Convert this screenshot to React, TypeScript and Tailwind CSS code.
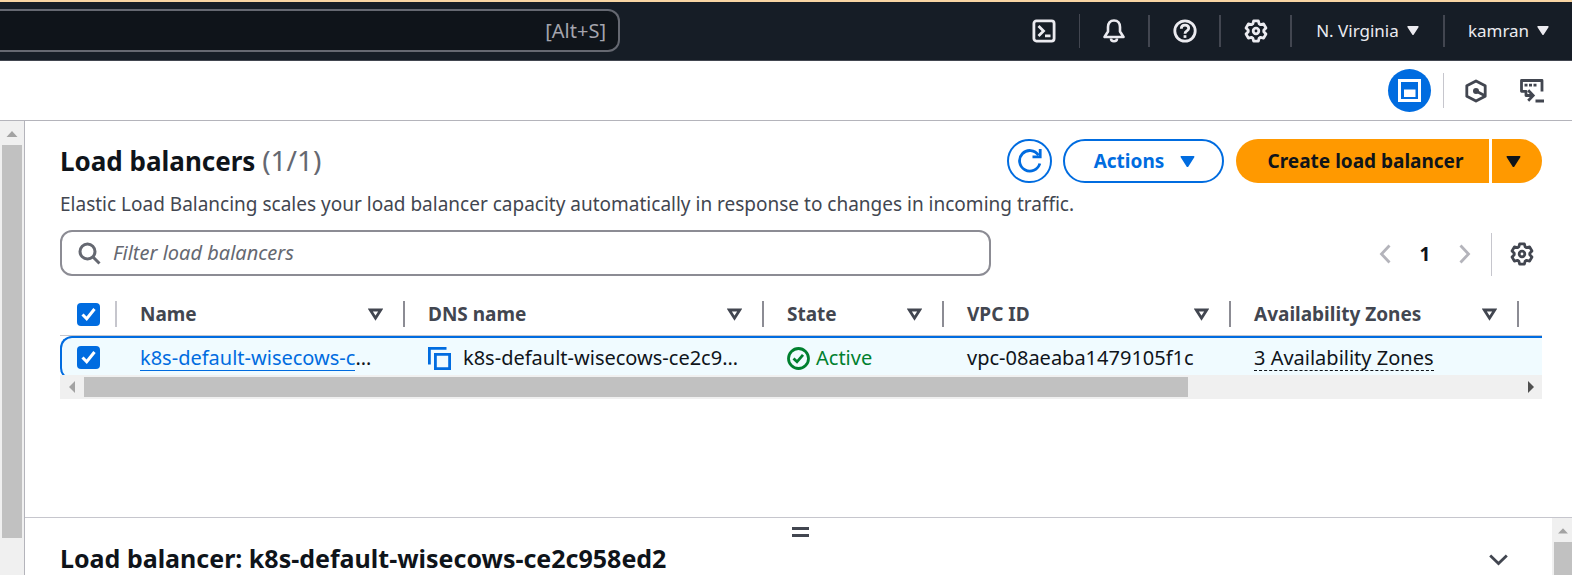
import React from 'react';

const GEAR = (() => {
  const corners: [number, number][] = [
    [-24, 7.8],
    [-13, 10.4],
    [13, 10.4],
    [24, 7.8],
  ];
  const points: string[] = [];
  for (let tooth = 0; tooth < 6; tooth += 1) {
    for (const [offset, radius] of corners) {
      const angle = ((tooth * 60 + offset) * Math.PI) / 180;
      points.push(`${(12 + radius * Math.sin(angle)).toFixed(2)} ${(12 - radius * Math.cos(angle)).toFixed(2)}`);
    }
  }
  return `M${points.join('L')}Z`;
})();

function Gear() {
  return (
    <svg className="size-6" viewBox="0 0 24 24" fill="none" stroke="currentColor" strokeWidth="2.8" strokeLinejoin="round" aria-hidden="true">
      <path d={GEAR} />
      <circle cx="12" cy="12" r="2.8" />
    </svg>
  );
}

function Caret({ className }: { className: string }) {
  return (
    <svg className={className} viewBox="0 0 16 14" fill="currentColor" stroke="currentColor" strokeWidth="2" strokeLinejoin="round" aria-hidden="true">
      <path d="M1.5 2h13L8 12z" />
    </svg>
  );
}

function Separator({ className }: { className: string }) {
  return <span className={`shrink-0 ${className}`} aria-hidden="true" />;
}

function TopBar() {
  const item = 'flex h-full items-center justify-center text-[#ebebf0]';
  const line = 'h-8 w-[2px] bg-[#424650]';
  return (
    <header className="flex h-[61px] shrink-0 items-center justify-between border-t-2 border-b border-t-[#f8d5a3] border-b-[#424650] bg-[#161d26] pb-px">
      <label className="flex h-[43px] w-[620px] items-center rounded-r-xl border-2 border-l-0 border-[#656871] bg-[#0f141a] pr-3">
        <input type="search" aria-label="Search" className="min-w-0 flex-1 bg-transparent text-white outline-none" />
        <span className="text-[20px] leading-7 text-[#a4a4ad]">[Alt+S]</span>
      </label>
      <nav className="flex h-full items-center">
        <button aria-label="CloudShell" className={`${item} w-[70px]`}>
          <svg className="size-6" viewBox="0 0 24 24" fill="none" stroke="currentColor" strokeWidth="2.8">
            <rect x="1.9" y="1.9" width="20.2" height="20.2" rx="2.5" />
            <path d="M6.5 7l5 5-5 5M13 16.800h5.500" />
          </svg>
        </button>
        <Separator className="h-[34px] w-px bg-[#424650]" />
        <button aria-label="Notifications" className={`${item} w-[68px]`}>
          <svg className="size-6" viewBox="0 0 24 24" fill="none" stroke="currentColor" strokeWidth="2.6" strokeLinejoin="round">
            <path d="M12 1.500c-4 0-6 3-6 6.500v4.500L2.500 18h19L18 12.500V8c0-3.500-2-6.500-6-6.500z" />
            <path d="M9 19.500c0 1.800 1.200 2.800 3 2.800s3-1 3-2.800" />
          </svg>
        </button>
        <Separator className={line} />
        <button aria-label="Help" className={`${item} w-[69px]`}>
          <svg className="size-6" viewBox="0 0 24 24" fill="none" stroke="currentColor" strokeWidth="2.8">
            <circle cx="12" cy="12" r="10.2" />
            <path d="M8.300 9.700c0-2.100 1.500-3.500 3.700-3.500s3.700 1.300 3.700 3.100c0 2.700-3.700 2.500-3.700 5.400" />
            <path d="M12 16.200v2.700" />
          </svg>
        </button>
        <Separator className={line} />
        <button aria-label="Settings" className={`${item} w-[69px]`}>
          <Gear />
        </button>
        <Separator className={line} />
        <button className={`${item} w-[151px] gap-2 text-[17px]`}>
          N. Virginia <Caret className="h-[11px] w-3" />
        </button>
        <Separator className={line} />
        <button className={`${item} w-[127px] gap-2 text-[17px]`}>
          kamran <Caret className="h-[11px] w-3" />
        </button>
      </nav>
    </header>
  );
}

function ToolBar() {
  return (
    <div className="flex h-[60px] shrink-0 items-center justify-end border-b border-[#b4b4bb] pr-7 text-[#424650]">
      <button aria-label="Split panel" className="flex size-[43px] items-center justify-center rounded-full bg-[#006ce0] text-white">
        <svg className="size-[23px]" viewBox="0 0 23 23" fill="none" stroke="currentColor" strokeWidth="3">
          <path d="M1.500 1.500h20v20h-20z" />
          <path d="M6 10.500h11.500v7.500H6z" fill="currentColor" stroke="none" />
        </svg>
      </button>
      <Separator className="ml-3 h-[35px] w-px bg-[#c6c6cd]" />
      <button aria-label="Diagnose" className="ml-5 flex size-6 items-center justify-center">
        <svg className="size-6" viewBox="0 0 24 24" fill="none" stroke="currentColor" strokeWidth="2.8" strokeLinejoin="round">
          <path d="M12 1.900l9.200 4.900v10.400L12 22.100l-9.200-4.900V6.800z" />
          <circle cx="12" cy="12" r="3" fill="currentColor" stroke="none" />
          <path d="M12 12l8.500 4.500" />
        </svg>
      </button>
      <button aria-label="Open terminal" className="ml-8 flex size-6 items-center justify-center">
        <svg className="size-6" viewBox="0 0 24 24" fill="none" stroke="currentColor" strokeWidth="2.8">
          <path d="M22 12.500V1.500H1.500V12.300H6V16.500h7" strokeLinejoin="round" />
          <path d="M4.500 6.200h12" strokeDasharray="3 1.500" />
          <path d="M8.200 11.300l5 5.200-5 5.200M15.500 22h8.500" />
        </svg>
      </button>
    </div>
  );
}

function CheckBox({ label }: { label: string }) {
  return (
    <label className="relative block size-[23px]">
      <input type="checkbox" defaultChecked aria-label={label} className="block size-[23px] appearance-none rounded-[4px] border-2 border-[#8c8c94] checked:border-0 checked:bg-[#006ce0]" />
      <svg className="pointer-events-none absolute inset-0 size-[23px]" viewBox="0 0 23 23" fill="none" stroke="white" strokeWidth="3">
        <path d="M5.500 11.500l4.200 4.300 7.800-9.800" />
      </svg>
    </label>
  );
}

function SortIcon() {
  return (
    <svg className="h-[13px] w-[15px] shrink-0" viewBox="0 0 15 13" fill="none" stroke="currentColor" strokeWidth="2.8" strokeLinejoin="miter">
      <path d="M2.300 2h10.400L7.500 10.200z" />
    </svg>
  );
}

const COLUMNS = ['Name', 'DNS name', 'State', 'VPC ID', 'Availability Zones'];

function BalancerTable() {
  const cell = 'h-11 border-t-2 border-[#006ce0] bg-[#f0fbff] pl-[23px] pr-1 pb-[2px] align-middle';
  return (
    <div className="mt-[15px]">
      <div className="h-[84px] overflow-hidden">
        <table className="w-full table-fixed border-separate border-spacing-0 text-left text-[20px] leading-6 text-[#0f141a]">
          <colgroup>
            <col className="w-[57px]" />
            <col className="w-[288px]" />
            <col className="w-[359px]" />
            <col className="w-[180px]" />
            <col className="w-[287px]" />
            <col className="w-[288px]" />
            <col />
          </colgroup>
          <thead className="text-[19px] text-[#424650]">
            <tr>
              <th className="h-[45px] border-b border-[#c6c6cd] p-0 pt-[2px]">
                <div className="flex h-[26px] items-center border-r-2 border-[#c6c6cd] pl-[17px]">
                  <CheckBox label="Select all load balancers" />
                </div>
              </th>
              {COLUMNS.map((name) => (
                <th key={name} className="h-[45px] border-b border-[#c6c6cd] p-0 pt-[2px] font-bold">
                  <button className="flex h-[26px] w-full items-center justify-between border-r-2 border-[#8c8c94] pl-[23px] pr-5">
                    {name}
                    <SortIcon />
                  </button>
                </th>
              ))}
              <th className="border-b border-[#c6c6cd] p-0" aria-label="More" />
            </tr>
          </thead>
          <tbody>
            <tr>
              <td className="h-11 rounded-l-xl border-2 border-r-0 border-[#006ce0] bg-[#f0fbff] p-0 pb-[2px] pl-[15px] align-middle">
                <CheckBox label="Select k8s-default-wisecows-ce2c958ed2" />
              </td>
              <td className={cell}>
                <span className="flex">
                  <a href="#balancer" className="border-b border-[#006ce0] text-[#006ce0]">k8s-default-wisecows-c</a>…
                </span>
              </td>
              <td className={cell}>
                <span className="flex items-center gap-3 whitespace-nowrap">
                  <button aria-label="Copy DNS name" className="text-[#006ce0]">
                    <svg className="size-[23px]" viewBox="0 0 23 23" fill="none" stroke="currentColor" strokeWidth="2.8">
                      <path d="M7.400 7.400h14.200v14.200H7.400z" />
                      <path d="M1.400 17.500V1.400h17.100" />
                    </svg>
                  </button>
                  k8s-default-wisecows-ce2c9…
                </span>
              </td>
              <td className={cell}>
                <span className="flex items-center gap-[6px] text-[#00802f]">
                  <svg className="size-[23px]" viewBox="0 0 23 23" fill="none" stroke="currentColor" strokeWidth="2.8">
                    <circle cx="11.500" cy="11.500" r="10" />
                    <path d="M6.500 11.500l3.500 3.300 6-7" />
                  </svg>
                  Active
                </span>
              </td>
              <td className={`${cell} whitespace-nowrap`}>vpc-08aeaba1479105f1c</td>
              <td className={`${cell} whitespace-nowrap`}>
                <button className="block border-b border-dashed border-[#0f141a]">3 Availability Zones</button>
              </td>
              <td className={cell} />
            </tr>
          </tbody>
        </table>
      </div>
      <div className="flex h-6 items-center bg-[#f0f0f0] text-[#505050]">
        <svg className="h-3 w-6 text-[#a3a3a3]" viewBox="0 0 24 12" fill="currentColor"><path d="M15 0v12L9 6z" /></svg>
        <div className="flex-1"><div className="h-5 w-[77%] bg-[#c1c1c1]" /></div>
        <svg className="h-3 w-6" viewBox="0 0 24 12" fill="currentColor"><path d="M10 0v12l6-6z" /></svg>
      </div>
    </div>
  );
}

function ScrollUp() {
  return (
    <svg className="h-6 w-full shrink-0" viewBox="0 0 20 24" fill="#a3a3a3" aria-hidden="true">
      <path d="M4.500 16h11l-5.500-6z" />
    </svg>
  );
}

export default function App() {
  return (
    <div className="flex h-screen flex-col overflow-hidden bg-white font-['Noto_Sans',sans-serif] text-[#0f141a]">
      <TopBar />
      <ToolBar />
      <div className="flex min-h-0 flex-1">
        <div className="flex w-[25px] shrink-0 flex-col border-r border-[#b4b4bb] bg-[#f0f0f0] px-[2px]">
          <ScrollUp />
          <div className="h-[393px] bg-[#c1c1c1]" />
        </div>
        <div className="flex min-w-0 flex-1 flex-col">
          <main className="min-h-0 flex-1 pl-[35px] pr-[30px] pt-[18px]">
            <div className="flex h-11 items-center justify-between">
              <h1 className="pb-[2px] text-[26px] font-bold leading-8">
                Load balancers <span className="text-[28px] font-normal text-[#656871]">(1/1)</span>
              </h1>
              <div className="flex h-11 text-[19px] font-bold">
                <button aria-label="Refresh" className="flex w-[45px] items-center justify-center rounded-full border-2 border-[#006ce0] text-[#006ce0]">
                  <svg className="size-6" viewBox="0 0 24 24" fill="none" stroke="currentColor" strokeWidth="2.8">
                    <path d="M21.800 14.500A10.300 10.300 0 1 1 20.500 6.200" />
                    <path d="M22.200 0v7.800H14.500" />
                  </svg>
                </button>
                <button className="ml-[11px] flex w-[161px] items-center justify-center gap-4 rounded-full border-2 border-[#006ce0] pl-[2px] text-[#006ce0]">
                  Actions <Caret className="h-[13px] w-[15px]" />
                </button>
                <button className="ml-3 w-[253px] rounded-l-full bg-[#ff9900] pl-[6px]">Create load balancer</button>
                <button aria-label="More create options" className="ml-[3px] flex w-[50px] items-center rounded-r-full bg-[#ff9900] pl-[14px]">
                  <Caret className="h-[13px] w-[15px]" />
                </button>
              </div>
            </div>
            <p className="mt-[7px] text-[19px] leading-7 text-[#424650]">
              Elastic Load Balancing scales your load balancer capacity automatically in response to changes in incoming traffic.
            </p>
            <div className="mt-3 flex h-[46px] items-center justify-between">
              <label className="flex h-full w-[931px] max-w-[70%] items-center gap-3 rounded-xl border-2 border-[#8c8c94] px-4 text-[#656871]">
                <svg className="size-[23px] shrink-0" viewBox="0 0 23 23" fill="none" stroke="currentColor" strokeWidth="3">
                  <circle cx="9.500" cy="9.500" r="7.500" />
                  <path d="M15 15l6.500 6.500" />
                </svg>
                <input placeholder="Filter load balancers" aria-label="Filter load balancers" className="min-w-0 flex-1 bg-transparent text-[20px] italic outline-none placeholder:text-[#656871]" />
              </label>
              <div className="flex items-center pr-2 pt-[2px] text-[#424650]">
                <button aria-label="Previous page" className="text-[#b4b4bb]">
                  <svg className="h-5 w-3" viewBox="0 0 12 20" fill="none" stroke="currentColor" strokeWidth="2.8"><path d="M10.500 1.500L2.500 10l8 8.500" /></svg>
                </button>
                <button className="w-[68px] text-[19px] font-bold text-[#0f141a]">1</button>
                <button aria-label="Next page" className="text-[#b4b4bb]">
                  <svg className="h-5 w-3" viewBox="0 0 12 20" fill="none" stroke="currentColor" strokeWidth="2.8"><path d="M1.500 1.500l8 8.500-8 8.500" /></svg>
                </button>
                <Separator className="ml-5 h-[43px] w-px bg-[#c6c6cd]" />
                <button aria-label="Preferences" className="ml-[18px]"><Gear /></button>
              </div>
            </div>
            <BalancerTable />
          </main>
          <section className="flex h-[58px] shrink-0 border-t border-[#c6c6cd]">
            <div className="min-w-0 flex-1">
              <div className="pl-6">
                <button aria-label="Resize split panel" className="mx-auto mt-[9px] block h-[10px] w-[17px] border-y-[3px] border-[#424650]" />
              </div>
              <div className="mt-[6px] flex items-center justify-between pl-[35px] pr-11">
                <h2 className="text-[25px] font-bold leading-[30px]">Load balancer: k8s-default-wisecows-ce2c958ed2</h2>
                <button aria-label="Collapse panel" className="pt-[3px] text-[#424650]">
                  <svg className="h-3 w-[19px]" viewBox="0 0 19 12" fill="none" stroke="currentColor" strokeWidth="2.8"><path d="M1.200 1.500l8.300 8 8.300-8" /></svg>
                </button>
              </div>
            </div>
            <div className="flex w-5 shrink-0 flex-col bg-[#f0f0f0] pl-[2px]">
              <ScrollUp />
              <div className="flex-1 bg-[#c1c1c1]" />
            </div>
          </section>
        </div>
      </div>
    </div>
  );
}
